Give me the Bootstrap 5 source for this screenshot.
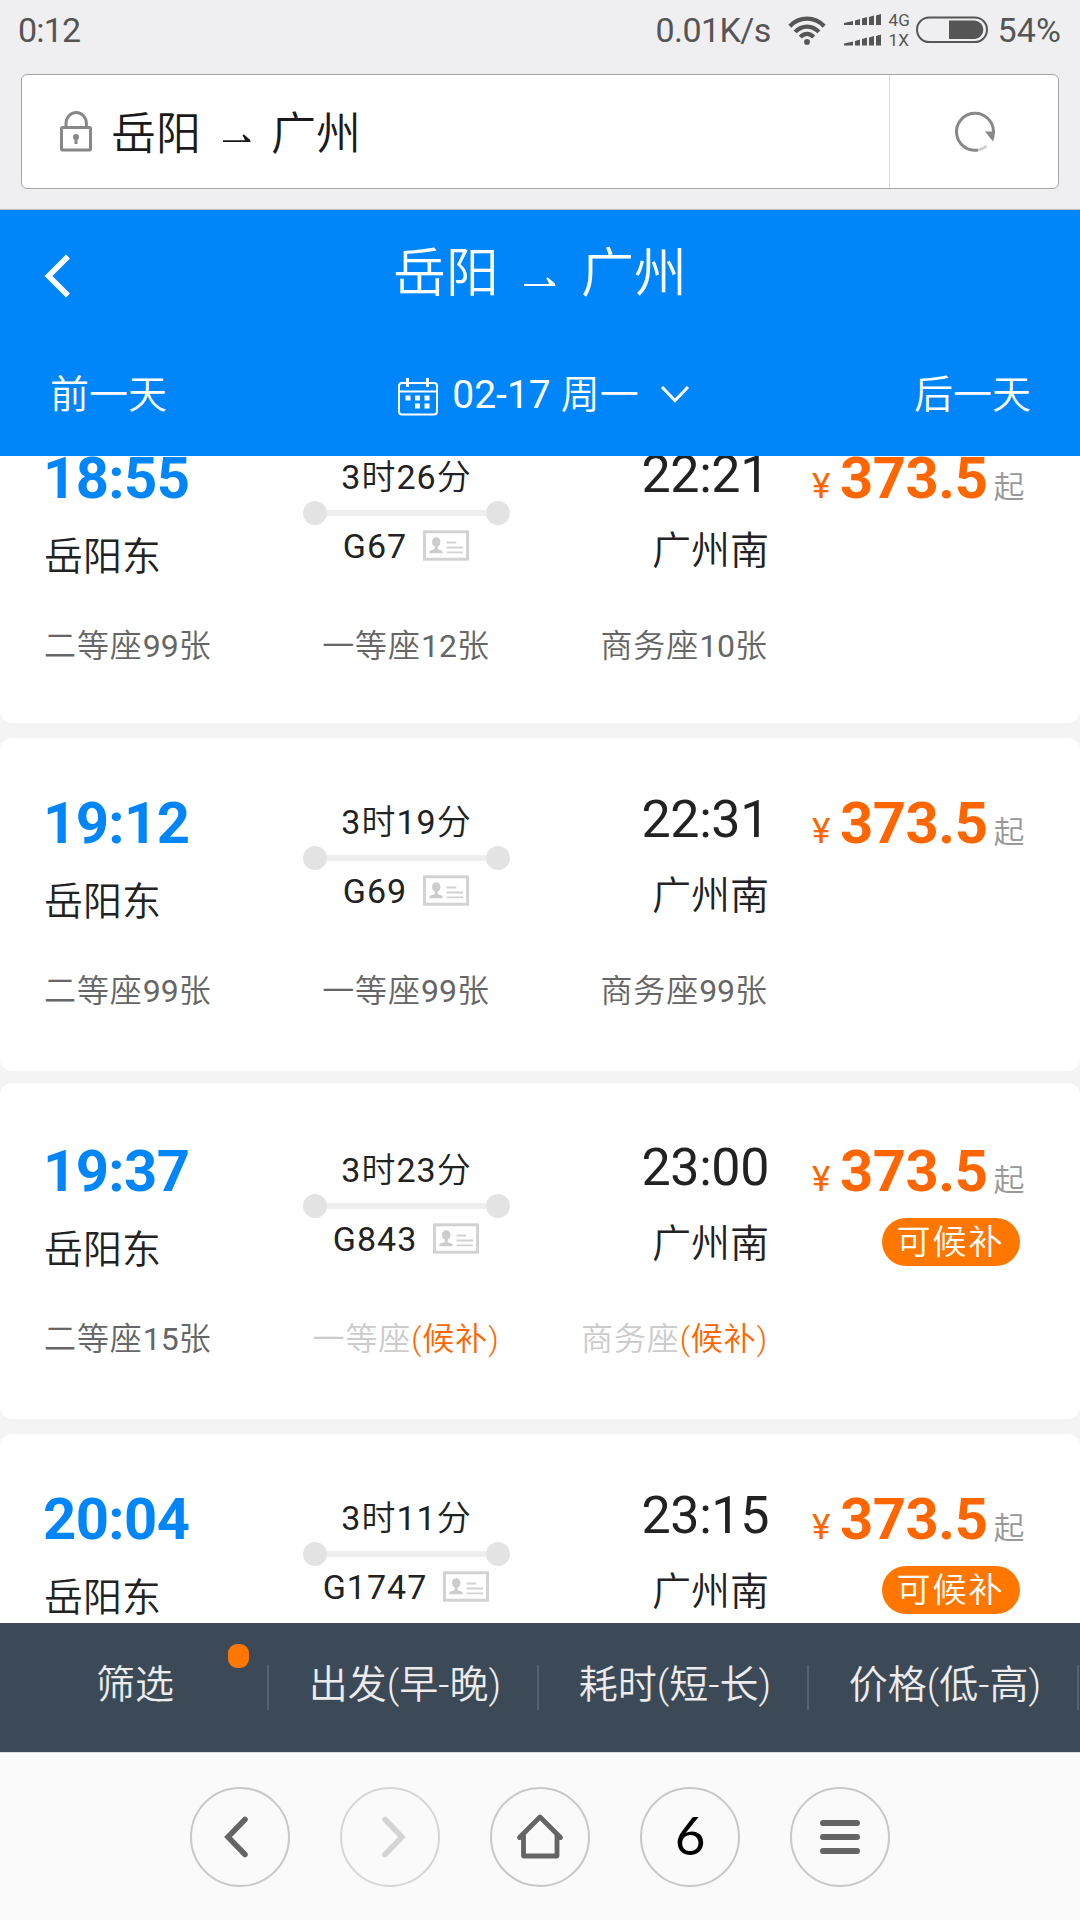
<!DOCTYPE html>
<html lang="zh-CN">
<head>
<meta charset="utf-8">
<meta name="viewport" content="width=device-width, initial-scale=1">
<title>岳阳 ⇀ 广州</title>
<link href="https://cdn.jsdelivr.net/npm/bootstrap@5.3.0/dist/css/bootstrap.min.css" rel="stylesheet">
<style>
  body { font-family: Roboto, "Noto Sans CJK SC", sans-serif; font-weight: 350; color: #222; background: #f4f4f4; width: 1080px; height: 1920px; overflow: hidden; }
  svg { display: block; flex: none; }
  .top-area { height: 210px; background: #efeff1; border-bottom: 1px solid #bcbcbe; }
  .status { height: 74px; padding: 0 19px 14px 18px; color: #555; font: 400 34px/60px Roboto, sans-serif; }
  .net-label { font-size: 17px; line-height: 20px; }
  .address { height: 115px; margin: 0 21px; border: 1px solid #a6a6a8; border-radius: 6px; }
  .address-text { font-size: 45px; line-height: 60px; color: #1a1a1a; padding-top: 6px; }
  .reload { width: 169px; border-left: 1px solid #dcdcdc; padding-left: 1px; }
  .train-head { height: 246px; background: #0086f9; }
  .head-title { height: 128px; padding-left: 44px; }
  .route { font-size: 53px; line-height: 60px; }
  .head-days { height: 118px; padding: 0 49px 0 50px; font-size: 39px; line-height: 60px; }
  .head-side { width: 200px; padding-top: 27px; }
  .result-list { height: 1167px; }
  .train { border-radius: 12px; padding-left: 44px; }
  .train-1 { height: 331px; margin-top: -64px; padding-top: 52px; margin-bottom: 15px; }
  .train-2 { height: 333px; padding-top: 51px; margin-bottom: 12px; }
  .train-3 { height: 336px; padding-top: 54px; margin-bottom: 15px; }
  .train-4 { height: 336px; padding-top: 51px; }
  .trip { height: 182px; }
  .c-from { width: 205px; padding-top: 4px; }
  .c-mid { width: 315px; padding-top: 13px; font-size: 34px; line-height: 40px; letter-spacing: 1px; font-weight: 400; }
  .c-to { width: 205px; }
  .c-price { width: 300px; padding: 4px 0 0 43px; }
  .t-from { font-size: 58px; line-height: 60px; font-weight: 700; color: #0086f9; letter-spacing: -.6px; margin-left: -1px; }
  .t-to { font-size: 52px; line-height: 60px; font-weight: 400; letter-spacing: -.4px; padding-top: 1px; }
  .stop { font-size: 39px; line-height: 60px; }
  .c-from .stop { margin-top: 19px; }
  .c-to .stop { margin-top: 16px; }
  .cn { font-weight: 350; }
  .track { width: 207px; height: 24px; margin: 4px 0 1px; }
  .track i { width: 24px; height: 24px; border-radius: 50%; background: #e3e3e3; }
  .track b { height: 6px; background: #eee; }
  .fare { line-height: 60px; height: 60px; color: #f60; }
  .fare-yen { font-size: 35px; font-weight: 400; width: 28px; }
  .fare-num { font-size: 58px; font-weight: 700; letter-spacing: -.5px; }
  .fare-from { font-size: 31px; color: #999; margin-left: 6px; }
  .wait-tag { width: 138px; height: 48px; margin: 17px 0 0 70px; border-radius: 24px; background: #f70; color: #fff; font-size: 34px; line-height: 49px; letter-spacing: 2px; padding-right: 1px; }
  .seats { font-size: 32px; line-height: 40px; letter-spacing: .9px; color: #666; }
  .seats .num { font-weight: 400; letter-spacing: 0; }
  .seats .off { color: #ccc; }
  .seats .wl { color: #f60; }
  .s-1 { width: 205px; } .s-2 { width: 314px; } .s-3 { width: 205px; }
  .sort-bar { height: 129px; background: #3c4a57; color: #ececee; font-size: 39px; line-height: 60px; }
  .sort-item { width: 270px; height: 129px; padding-top: 32px; }
  .sort-item::after { content: ""; position: absolute; right: 1px; top: 42px; width: 2px; height: 45px; background: #54626e; }
  .dot { top: 21px; left: 228px; width: 21px; height: 24px; border-radius: 9px; background: #f70; }
  .tool-bar { height: 168px; background: #fafafa; border-top: 1px solid #ddd; gap: 50px; }
  .tool { width: 100px; height: 100px; border: 2px solid #c8c8c8; border-radius: 50%; }
  .tool-off { border-color: #d6d6d6; }
  .tab-count { font: 400 53px/60px Lato, sans-serif; color: #000; margin-top: -4px; }
</style>
<script src="https://cdn.jsdelivr.net/npm/bootstrap@5.3.0/dist/js/bootstrap.bundle.min.js"></script>
</head>
<body>
<svg width="0" height="0" class="position-absolute">
  <symbol id="idcard" viewBox="0 0 48 32">
    <rect x="1.5" y="1.5" width="44" height="28" fill="#fff" stroke="#d2d2d2" stroke-width="3"/>
    <ellipse cx="13.500" cy="12" rx="4.300" ry="5" fill="#ccc"/>
    <path d="M12 15h3v4l5 2v2.500H6.500V21l5.500-2z" fill="#ccc"/>
    <path d="M24 12.500h10M24 17.500h17M24 22.500h17" stroke="#d2d2d2" stroke-width="2"/>
  </symbol>
  <symbol id="arrow" viewBox="0 0 32 10">
    <path d="M0 8H31M23 1l7.500 6.500" fill="none" stroke="currentColor" stroke-width="2"/>
    <path d="M22.500 1l9.500 8h-6z" fill="currentColor"/>
  </symbol>
</svg>

<header class="top-area">
  <div class="status d-flex align-items-center">
    <span class="me-auto" style="letter-spacing:-.8px">0:12</span>
    <span style="letter-spacing:-.6px">0.01K/s</span>
    <svg class="ms-3" width="40" height="31" viewBox="0 0 42 32" fill="none" stroke="#555" stroke-width="4.400">
      <path d="M3 11.500C13 1 29 1 39 11.500M8.500 17.500c7-7.500 18-7.500 25 0M14 23c4-4.500 10-4.500 14 0"/>
      <circle cx="21" cy="28" r="3" fill="#555" stroke="none"/>
    </svg>
    <svg width="38" height="34" viewBox="0 0 38 34" fill="#555" style="margin-left:17px">
      <g id="bars"><path d="M0 10l9-2v4H0zM11 7.500l5-1.500v6h-5zM18 5.500l5-1.500v8h-5zM25 4l5-1.500V12h-5zM32 2.500l5-1.500v11h-5z"/></g>
      <use href="#bars" y="20.500"/>
    </svg>
    <span class="net-label d-flex flex-column" style="margin-left:7px;width:27px"><span>4G</span><span>1X</span></span>
    <svg width="72" height="28" viewBox="0 0 72 28">
      <rect x="1" y="1.500" width="70" height="24.500" rx="12.200" fill="none" stroke="#555" stroke-width="2"/>
      <path d="M33 4.500h26a9.300 9.300 0 0 1 0 18.500H33z" fill="#555"/>
    </svg>
    <span style="margin-left:10px;letter-spacing:.1px">54%</span>
  </div>
  <div class="address bg-white d-flex">
    <div class="d-flex align-items-center flex-grow-1" style="padding-left:38px">
      <svg width="32" height="42" viewBox="0 0 32 42" fill="none" stroke="#888" stroke-width="3" style="margin-top:-1px">
        <rect x="1.500" y="17.500" width="29" height="22.500" rx="1"/>
        <path d="M6 17v-3.500a10.200 11 0 0 1 20.400 0V17"/>
        <circle cx="16" cy="27" r="3" fill="#888" stroke="none"/><path d="M16 27v7"/>
      </svg>
      <div class="address-text d-flex align-items-center" style="margin-left:19px">岳阳<svg width="28" height="9" style="margin:8px 20px 0 22px"><use href="#arrow"/></svg>广州</div>
    </div>
    <div class="reload d-flex align-items-center justify-content-center">
      <svg width="42" height="42" viewBox="0 0 42 42" fill="none">
        <path d="M39.500 21A18.500 18.500 0 1 0 24 39" stroke="#888" stroke-width="3"/>
        <path d="M24 39q5-.8 8.500-4" stroke="#ccc" stroke-width="2.500"/>
        <path d="M31 20.500h10q0 5-2 10z" fill="#888"/>
      </svg>
    </div>
  </div>
</header>

<section class="train-head text-white">
  <div class="head-title d-flex align-items-center">
    <svg width="28" height="44" viewBox="0 0 28 44" fill="none" stroke="#fff" stroke-width="5.500" style="margin-top:4px"><path d="M24 2.500L4.500 22 24 41.500"/></svg>
    <div class="route flex-grow-1 d-flex align-items-center justify-content-center" style="padding-right:72px">岳阳<svg width="32" height="10" style="margin:15px 25px 0 25px"><use href="#arrow"/></svg>广州</div>
  </div>
  <div class="head-days d-flex justify-content-between">
    <div class="head-side">前一天</div>
    <div class="d-flex align-items-center" style="height:114px;padding-left:7px">
      <svg width="40" height="38" viewBox="0 0 40 38" fill="none" stroke="#fff" stroke-width="2" style="margin-top:3px">
        <rect x="1" y="5" width="38" height="31.500" rx="3"/><path d="M1 13.500h38"/>
        <path d="M9.500 0v9M29.500 0v9" stroke-width="3"/>
        <path d="M7.500 20h5M17 20h5M26.500 20h5M17 28h5M26.500 28h5" stroke-width="5"/>
      </svg>
      <span style="margin-left:14px;font-weight:400">02-17</span><span style="margin-left:10px">周一</span>
      <svg width="30" height="18" viewBox="0 0 30 18" fill="none" stroke="#fff" stroke-width="3" style="margin:-2px 0 0 21px"><path d="M2 2l13 13.500L28 2"/></svg>
    </div>
    <div class="head-side text-end">后一天</div>
  </div>
</section>

<main class="result-list overflow-hidden">
  <article class="train train-1 bg-white">
    <div class="trip d-flex">
      <div class="c-from"><div class="t-from">18:55</div><div class="stop">岳阳东</div></div>
      <div class="c-mid d-flex flex-column align-items-center">
        <div>3<span class="cn">时</span>26<span class="cn">分</span></div>
        <div class="track d-flex align-items-center"><i></i><b class="flex-grow-1"></b><i></i></div>
        <div class="d-flex align-items-center"><span>G67</span><svg width="47" height="32" class="ms-3"><use href="#idcard"/></svg></div>
      </div>
      <div class="c-to text-end"><div class="t-to">22:21</div><div class="stop">广州南</div></div>
      <div class="c-price"><div class="fare d-flex align-items-baseline"><span class="fare-yen">¥</span><span class="fare-num">373.5</span><span class="fare-from">起</span></div></div>
    </div>
    <div class="seats d-flex"><div class="s-1 text-nowrap">二等座<span class="num">99</span>张</div><div class="s-2 text-center">一等座<span class="num">12</span>张</div><div class="s-3 text-end">商务座<span class="num">10</span>张</div></div>
  </article>

  <article class="train train-2 bg-white">
    <div class="trip d-flex">
      <div class="c-from"><div class="t-from">19:12</div><div class="stop">岳阳东</div></div>
      <div class="c-mid d-flex flex-column align-items-center">
        <div>3<span class="cn">时</span>19<span class="cn">分</span></div>
        <div class="track d-flex align-items-center"><i></i><b class="flex-grow-1"></b><i></i></div>
        <div class="d-flex align-items-center"><span>G69</span><svg width="47" height="32" class="ms-3"><use href="#idcard"/></svg></div>
      </div>
      <div class="c-to text-end"><div class="t-to">22:31</div><div class="stop">广州南</div></div>
      <div class="c-price"><div class="fare d-flex align-items-baseline"><span class="fare-yen">¥</span><span class="fare-num">373.5</span><span class="fare-from">起</span></div></div>
    </div>
    <div class="seats d-flex"><div class="s-1 text-nowrap">二等座<span class="num">99</span>张</div><div class="s-2 text-center">一等座<span class="num">99</span>张</div><div class="s-3 text-end">商务座<span class="num">99</span>张</div></div>
  </article>

  <article class="train train-3 bg-white">
    <div class="trip d-flex">
      <div class="c-from"><div class="t-from">19:37</div><div class="stop">岳阳东</div></div>
      <div class="c-mid d-flex flex-column align-items-center">
        <div>3<span class="cn">时</span>23<span class="cn">分</span></div>
        <div class="track d-flex align-items-center"><i></i><b class="flex-grow-1"></b><i></i></div>
        <div class="d-flex align-items-center"><span>G843</span><svg width="47" height="32" class="ms-3"><use href="#idcard"/></svg></div>
      </div>
      <div class="c-to text-end"><div class="t-to">23:00</div><div class="stop">广州南</div></div>
      <div class="c-price"><div class="fare d-flex align-items-baseline"><span class="fare-yen">¥</span><span class="fare-num">373.5</span><span class="fare-from">起</span></div><div class="wait-tag text-center">可候补</div></div>
    </div>
    <div class="seats d-flex"><div class="s-1 text-nowrap">二等座<span class="num">15</span>张</div><div class="s-2 text-center"><span class="off">一等座</span><span class="wl">(候补)</span></div><div class="s-3 text-end"><span class="off">商务座</span><span class="wl">(候补)</span></div></div>
  </article>

  <article class="train train-4 bg-white">
    <div class="trip d-flex">
      <div class="c-from"><div class="t-from">20:04</div><div class="stop">岳阳东</div></div>
      <div class="c-mid d-flex flex-column align-items-center">
        <div>3<span class="cn">时</span>11<span class="cn">分</span></div>
        <div class="track d-flex align-items-center"><i></i><b class="flex-grow-1"></b><i></i></div>
        <div class="d-flex align-items-center"><span>G1747</span><svg width="47" height="32" class="ms-3"><use href="#idcard"/></svg></div>
      </div>
      <div class="c-to text-end"><div class="t-to">23:15</div><div class="stop">广州南</div></div>
      <div class="c-price"><div class="fare d-flex align-items-baseline"><span class="fare-yen">¥</span><span class="fare-num">373.5</span><span class="fare-from">起</span></div><div class="wait-tag text-center">可候补</div></div>
    </div>
  </article>
</main>

<nav class="sort-bar d-flex text-center">
  <div class="sort-item position-relative">筛选<span class="dot position-absolute"></span></div>
  <div class="sort-item position-relative">出发(早-晚)</div>
  <div class="sort-item position-relative">耗时(短-长)</div>
  <div class="sort-item position-relative">价格(低-高)</div>
</nav>

<footer class="tool-bar d-flex justify-content-center align-items-center">
  <div class="tool d-flex align-items-center justify-content-center"><svg width="26" height="42" viewBox="0 0 26 42" fill="none" stroke="#646464" stroke-width="5.500" stroke-linecap="round" style="margin-right:9px"><path d="M22 3.500L5 21l17 17.500"/></svg></div>
  <div class="tool tool-off d-flex align-items-center justify-content-center"><svg width="26" height="42" viewBox="0 0 26 42" fill="none" stroke="#d4d4d4" stroke-width="5.500" stroke-linecap="round" style="margin-left:7px"><path d="M4 3.500L21 21 4 38.500"/></svg></div>
  <div class="tool d-flex align-items-center justify-content-center"><svg width="48" height="48" viewBox="0 0 48 48" fill="none" stroke="#646464" stroke-width="4.800" stroke-linecap="round" stroke-linejoin="round"><path d="M3.500 24.500L24 4l20.500 20.500M7.500 22v21h33.500V22"/></svg></div>
  <div class="tool d-flex align-items-center justify-content-center"><span class="tab-count">6</span></div>
  <div class="tool d-flex align-items-center justify-content-center"><svg width="40" height="34" viewBox="0 0 40 34" stroke="#646464" stroke-width="6" stroke-linecap="round"><path d="M3 3h34M3 17h34M3 31h34"/></svg></div>
</footer>
</body>
</html>
